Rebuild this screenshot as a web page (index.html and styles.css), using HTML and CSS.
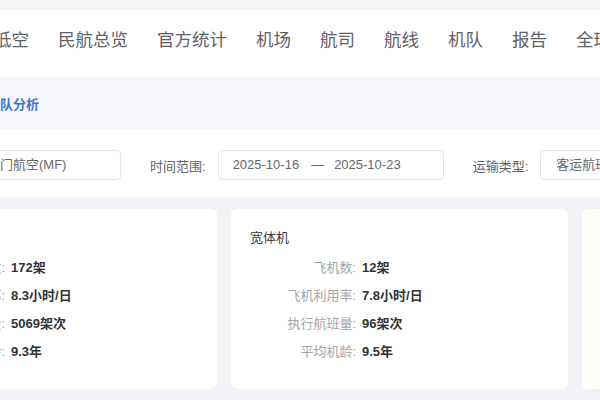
FILE: index.html
```html
<!DOCTYPE html>
<html lang="zh-CN">
<head>
    <meta charset="UTF-8">
    <meta name="viewport" content="width=device-width, initial-scale=1.0">
    <title>机队分析</title>
    <link rel="stylesheet" href="styles.css">
</head>
<body>
    <div class="topstrip"></div>
    <div class="nav">
        <span class="nav-item">低空</span>
        <span class="nav-item">民航总览</span>
        <span class="nav-item">官方统计</span>
        <span class="nav-item">机场</span>
        <span class="nav-item">航司</span>
        <span class="nav-item">航线</span>
        <span class="nav-item">机队</span>
        <span class="nav-item">报告</span>
        <span class="nav-item">全球</span>
    </div>
    <div class="crumb">
        <span class="crumb-title">机队分析</span>
    </div>
    <div class="filters">
        <div class="field">
            <div class="box box-airline">厦门航空(MF)</div>
        </div>
        <div class="field">
            <span class="label">时间范围:</span>
            <div class="box box-date">2025-10-16<span class="sep">—</span>2025-10-23</div>
        </div>
        <div class="field">
            <span class="label">运输类型:</span>
            <div class="box box-type">客运航班</div>
        </div>
    </div>
    <div class="cards">
        <div class="card">
            <div class="card-title">窄体机</div>
            <div class="rows">
                <div class="row"><span class="k">飞机数:</span><span class="v">172架</span></div>
                <div class="row"><span class="k">飞机利用率:</span><span class="v">8.3小时/日</span></div>
                <div class="row"><span class="k">执行航班量:</span><span class="v">5069架次</span></div>
                <div class="row"><span class="k">平均机龄:</span><span class="v">9.3年</span></div>
            </div>
        </div>
        <div class="card">
            <div class="card-title">宽体机</div>
            <div class="rows">
                <div class="row"><span class="k">飞机数:</span><span class="v">12架</span></div>
                <div class="row"><span class="k">飞机利用率:</span><span class="v">7.8小时/日</span></div>
                <div class="row"><span class="k">执行航班量:</span><span class="v">96架次</span></div>
                <div class="row"><span class="k">平均机龄:</span><span class="v">9.5年</span></div>
            </div>
        </div>
        <div class="card card-soft">
            <div class="card-title">支线机</div>
        </div>
    </div>
</body>
</html>
```
FILE: styles.css
```css
body {margin: 0; background: #f2f3f6; font-family: "Liberation Sans", "Noto Sans CJK SC", sans-serif; overflow: hidden;}
.topstrip {height: 10px; background: #f4f4f5;}
.nav {display: flex; gap: 29px; height: 67px; padding-top: 18px; box-sizing: border-box; background: #fff; margin-left: -6px; white-space: nowrap;}
.nav-item {font-size: 17.5px; line-height: 24px; color: #5f6166;}
.crumb {height: 53px; display: flex; align-items: center; background: #f4f6fa; margin-left: -13px;}
.crumb-title {font-size: 13px; font-weight: bold; color: #3d76cf;}
.filters {display: flex; gap: 29px; height: 67px; padding-top: 20px; box-sizing: border-box; background: #fff; margin-left: -60px; white-space: nowrap;}
.field {display: flex; align-items: center; gap: 12px; height: 30px;}
.label {font-size: 13px; color: #5f6166;}
.box {height: 28px; line-height: 28px; border: 1px solid #e3e5ea; border-radius: 4px; padding: 0 14px; font-size: 13px; color: #66686d; background: #fff;}
.box-airline {width: 181px; padding-left: 46px; box-sizing: border-box; height: 30px;}
.box-date {width: 226px; box-sizing: border-box; height: 30px;}
.box-type {width: 140px; box-sizing: border-box; height: 30px; padding-left: 15px;}
.sep {margin: 0 10px 0 12px;}
.cards {display: flex; gap: 14px; padding-top: 12px; margin-left: -120px;}
.card {flex: none; width: 337px; height: 180px; background: #fff; border-radius: 6px; padding: 19px 19px 0; box-sizing: border-box;}
.card-soft {background: #fffefa;}
.card-soft .card-title {color: #f5e9c8;}
.card-title {font-size: 13px; line-height: 20px; color: #3a3b3e;}
.rows {margin-top: 4px;}
.row {display: flex; align-items: center; height: 28px; font-size: 13px;}
.k {width: 106px; text-align: right; color: #a3a5aa;}
.v {margin-left: 6px; font-weight: bold; color: #333;}
```
